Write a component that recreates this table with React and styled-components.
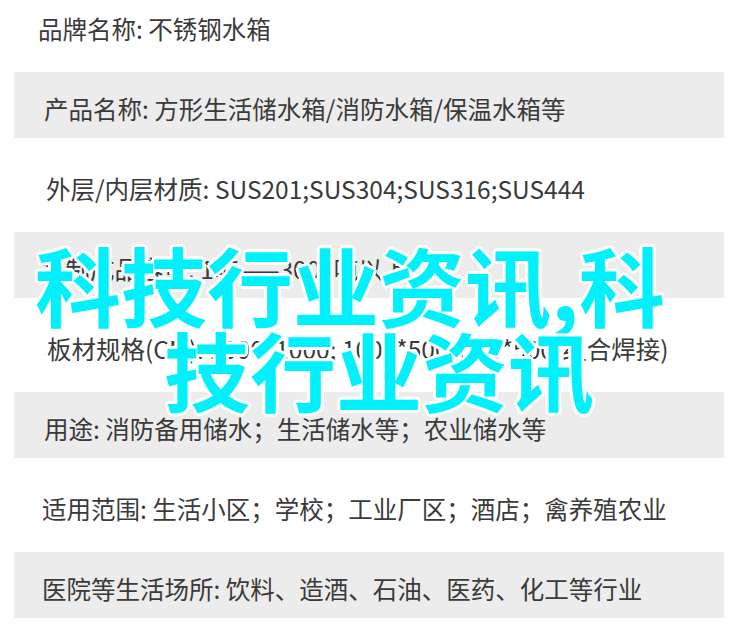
import React from "react";
import styled, { createGlobalStyle } from "styled-components";

const GlobalStyle = createGlobalStyle`
  html, body {
    margin: 0;
    padding: 0;
    background: #ffffff;
  }
  body {
    font-family: "Noto Sans CJK SC", "Noto Sans", sans-serif;
  }
`;

const Page = styled.div`
  position: relative;
  width: 750px;
  height: 638px;
  overflow: hidden;
  background: #ffffff;
`;

const SpecList = styled.ul`
  list-style: none;
  margin: -8px 0 0 0;
  padding: 0;
  display: flex;
  flex-direction: column;
  gap: 14px;
`;

const SpecRow = styled.li`
  height: 66px;
  margin: 0 26px 0 14px;
  padding: 6px 0 0 ${(p) => p.$indent}px;
  box-sizing: border-box;
  display: flex;
  align-items: center;
  background: ${(p) => (p.$shaded ? "#ececec" : "transparent")};
  color: #3a3a3a;
  font-size: 24.5px;
  white-space: nowrap;
`;

const Watermark = styled.div`
  position: absolute;
  top: 241px;
  left: 0;
  width: 750px;
  pointer-events: none;
`;

const MarkLine = styled.div`
  padding-left: ${(p) => p.$left}px;
  height: 85px;
  line-height: 85px;
  font-size: 86px;
  font-weight: 700;
  color: #00f1fc;
  white-space: nowrap;
  text-shadow:
    3px 0 0 #fff,
    -3px 0 0 #fff,
    0 3px 0 #fff,
    0 -3px 0 #fff,
    2px 2px 0 #fff,
    -2px 2px 0 #fff,
    2px -2px 0 #fff,
    -2px -2px 0 #fff;
`;

const specs = [
  { text: "品牌名称: 不锈钢水箱", indent: 24 },
  { text: "产品名称: 方形生活储水箱/消防水箱/保温水箱等", indent: 30 },
  { text: "外层/内层材质: SUS201;SUS304;SUS316;SUS444", indent: 32 },
  { text: "定制成品容量: 1吨——3000吨以上", indent: 27 },
  { text: "板材规格(CM): 1000*1000; 1000*500; 500*500(组合焊接)", indent: 33 },
  { text: "用途: 消防备用储水；生活储水等；农业储水等", indent: 30 },
  { text: "适用范围: 生活小区；学校；工业厂区；酒店；禽养殖农业", indent: 28 },
  { text: "医院等生活场所: 饮料、造酒、石油、医药、化工等行业", indent: 28 },
];

const App = () => {
  return (
    <Page>
      <GlobalStyle />
      <SpecList>
        {specs.map((s, i) => (
          <SpecRow key={i} $shaded={i % 2 === 1} $indent={s.indent}>
            {s.text}
          </SpecRow>
        ))}
      </SpecList>
      <Watermark>
        <MarkLine $left={35}>科技行业资讯,科</MarkLine>
        <MarkLine $left={164}>技行业资讯</MarkLine>
      </Watermark>
    </Page>
  );
};

export default App;
